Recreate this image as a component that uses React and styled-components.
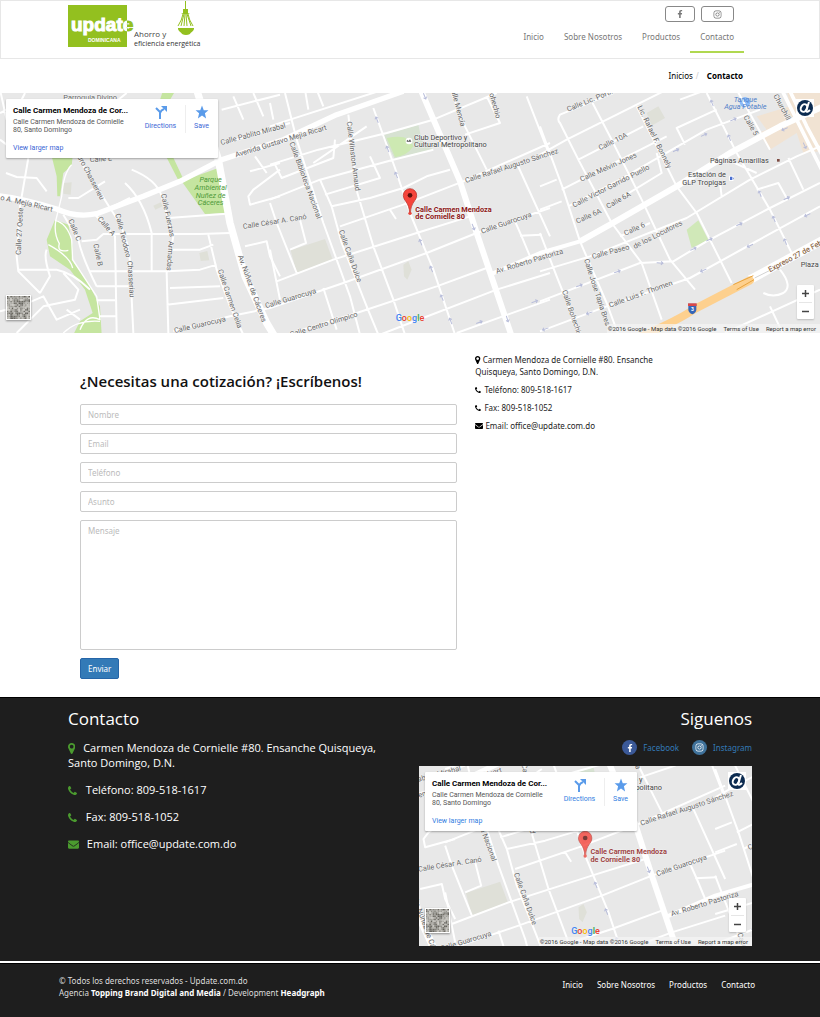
import styled, { createGlobalStyle } from "styled-components";
import { FaEnvelope, FaFacebookF, FaInstagram } from "react-icons/fa";

const GlobalStyle = createGlobalStyle`
    * {
        box-sizing: border-box;
    }

    body {
        margin: 0;
        background: #fff;
        color: #222;
        font-family: "Noto Sans", "Open Sans", sans-serif;
        font-size: 8px;
        line-height: 12px;
    }

    a {
        color: inherit;
        text-decoration: none;
    }
`

const LINKS = ["Inicio", "Sobre Nosotros", "Productos", "Contacto"];

// Street labels: text, x, y, angle
const STREETS = [
    ["Parroquia Divino", 190, 32, 0],
    ["Calle Pablito Mirabal", 664, 166, -15],
    ["Avenida Gustavo Mejia Ricart", 708, 203, -17],
    ["o A. Mejía Ricart", 0, 330, 13],
    ["Calle 27 Oeste", 62, 496, -87],
    ["Calle E", 270, 218, -5],
    ["dro Chasserieu", 232, 202, 62],
    ["Calle C", 205, 392, 68],
    ["Calle A", 292, 388, 50],
    ["Calle B", 280, 464, 78],
    ["Calle Teodoro", 346, 374, 76],
    ["Chasseriau", 382, 514, 86],
    ["Calle Fuerzas", 483, 314, 78],
    ["Armadas", 506, 454, 94],
    ["Calle Carmen Celia", 653, 542, 71],
    ["Av. Núñez de Cáceres", 714, 500, 70],
    ["Calle César A. Canó", 730, 418, -9],
    ["Calle Guarocuya", 524, 730, -13],
    ["Calle Guarocuya", 798, 656, -17],
    ["Calle Centro Olímpico", 872, 742, -17],
    ["Calle Biblioteca Nacional", 868, 160, 70],
    ["Calle Winston Arnaud", 1040, 96, 83],
    ["Calle Caña Dulce", 1016, 424, 70],
    ["Calle Mencía", 1350, -10, 75],
    ["ohechio", 1468, 12, 75],
    ["Calle Rafael Augusto Sánchez", 1398, 280, -18],
    ["Calle Guarocuya", 1446, 432, -19],
    ["Av. Roberto Pastoriza", 1490, 552, -17],
    ["Calle Lic. Portillo", 1704, 66, -22],
    ["Lic. Rafael F. Bonnely", 1912, 52, 64],
    ["Calle 10A", 1800, 182, -26],
    ["Calle Melvin Jones", 1744, 276, -24],
    ["Calle Victor Garrido Puello", 1722, 354, -27],
    ["Calle 6A", 1732, 402, -24],
    ["Calle 6A", 1824, 358, -30],
    ["Calle 6", 1876, 438, -24],
    ["Calle Paseo", 1778, 508, -15],
    ["de los Locutores", 1904, 478, -27],
    ["Calle Luis F. Thomen", 1830, 654, -20],
    ["Calle Jose Tapia Brea", 1752, 510, 72],
    ["Calle Bohechio", 1686, 604, 71],
    ["Calle 5", 2230, 82, 60],
    ["Churchill", 2320, 18, 62],
];

// Places: text, x, y, anchor
const PLACES = [
    ["Club Deportivo y", 1242, 150, "start"],
    ["Cultural Metropolitano", 1242, 173, "start"],
    ["Páginas Amarillas", 2130, 219, "start"],
    ["Estación de", 2178, 263, "end"],
    ["GLP Tropigas", 2178, 286, "end"],
    ["Plaza", 2402, 532, "start"],
];

const PARK = [
    ["Parque", 632, 276],
    ["Ambiental", 632, 300],
    ["Nuñez de", 632, 324],
    ["Cáceres", 632, 347],
];

const WATER = [
    ["Tanque", 2236, 36],
    ["Agua Potable", 2236, 58],
];

// One way arrows: x, y, angle
const ARROWS = [
    [1131, 90, -112], [1163, 178, -112], [1189, 256, -112], [1262, 458, -112], [1294, 538, -112],
    [1326, 624, -112], [1352, 694, -112], [1274, 20, 68], [1420, 412, 68], [1522, 688, 72],
    [1438, 698, -20], [1604, 636, -20], [1636, 718, 160], [1738, 588, -18], [1852, 546, -18],
    [1980, 520, 5], [2080, 478, -25], [2218, 404, -25], [2360, 326, -25], [2110, 542, 155],
    [2250, 468, 155], [2422, 376, 155], [1768, 670, 160], [2136, 40, -112], [2188, 144, -112],
    [2280, 312, -112], [2322, 388, -112], [2356, 456, -112], [2028, 182, -25], [2112, 136, -25],
    [2200, 90, -25], [2354, 118, 155], [2414, 168, 65], [2128, 450, -25],
];

const MINOR = `
    M85 205 60 350 50 500 55 545 120 610M18 250 50 262 110 265 140 305M0 150 20 165
    M55 540H170Q220 550 270 600M190 375 235 450Q245 500 290 590M235 205 330 355Q385 430 390 520L400 730
    M285 375 345 440 350 730M245 455 290 450 310 433H600L690 430M375 280Q430 330 455 430V545
    M395 240Q470 270 485 320L520 440 500 550 505 730M275 160M315 275 235 325H205M330 355 390 325
    M505 385 680 372M270 545H500L600 540 650 525M290 590H400M290 632H345M300 680H350
    M510 480H600L640 465M510 595 660 590M500 645 670 625M625 435 650 540 690 650 730 735
    M520 725 690 680 810 655M735 470 800 455 810 500 840 560M750 245 840 220M765 200 800 250
    M840 240 760 300 745 320 750 345 840 320M700 20 730 90M665 60 840 15M760 10 790 80M675 160 870 100
    M0 665 60 650 130 620 170 690 240 660M120 610 150 560Q130 500 140 480M190 550 235 600 225 630 130 650 50 730
    M200 660 240 690M0 70 60 40 75 10M355 30 380 10M0 0 20 90M230 200 270 150
`;

const MINOR_CENTER = `
    M310 55 375 235 420 370 490 540 555 735M45 10 80 150 160 400 240 620 270 735
    M235 75 262 310 310 470 370 630 405 735M150 270 185 350 215 460 290 650 325 735
    M0 225 145 180 350 130 490 90 680 10M0 330 150 270 370 210 490 180M0 110 60 90 340 0
    M15 225 35 265 190 205 195 150M165 315 330 265 300 200M130 220 290 110
    M185 350 300 325 400 295 470 260 540 240M210 410 400 345 580 275 840 160
    M20 575 190 510 440 430 600 380M0 655 220 580 470 490 620 430 840 355
    M50 735 260 670 500 590 650 535M330 735 420 700 680 600 840 550M560 730 740 665 840 630
    M360 360 378 388M90 390 108 460 60 480M0 340 20 400 80 550M0 480 30 630M160 595 200 720
    M545 10 585 110 650 240M585 135 690 100 650 20M770 20 840 200M740 220 840 440
    M735 395 755 440 780 500M750 438 815 435M105 0 115 60M140 0 160 50M0 40 10 90
`;

const MINOR_EAST = `
    M220 10 60 75Q50 90 60 100L115 210 215 400 305 520 365 690M0 110 70 300 120 455 200 640 235 735
    M155 35 215 150 305 330 390 510 465 600M290 50 410 290 470 370 575 580M500 10 590 190 690 360 755 490
    M0 195 80 150 380 0M115 210 310 110M65 300 380 140M85 350 240 270 500 120 660 60M0 290 50 270M0 360 65 335
    M350 190 365 250 250 320M435 165 410 115 530 60M240 440 330 400M0 545 150 500 440 385 630 270 770 200 840 170
    M0 635 300 520 400 515 500 455 690 355 840 280M0 725 200 650 450 565 640 460 840 350M555 730 840 600
    M540 280 545 320M650 300 715 280 740 325M745 205 790 300M0 430 50 560 120 735M690 650 730 735
    M670 610Q700 625 730 610 760 590 720 540M420 30 500 0M590 0 690 180M540 200 650 250
`;

// Aerial thumbnail cells
const CELLS = Array.from({ length: 196 }, (_, i) => {
    const n = Math.abs(Math.sin(i * 12.9898) * 43758.5453) % 1;
    const c = Math.round(95 + n * 110);
    return { x: i % 14, y: Math.floor(i / 14), fill: `rgb(${c}, ${c - 2}, ${c - 9})` };
});

const MapPin = () => (
    <PinSvg viewBox="0 0 1024 1536" aria-hidden="true">
        <path d="M768 512q0-106-75-181t-181-75-181 75-75 181 75 181 181 75 181-75 75-181zm256 0q0 109-33 179l-364 774q-16 33-47.500 52t-67.500 19-67.500-19-46.500-52l-365-774q-33-70-33-179 0-212 150-362t362-150 362 150 150 362z" />
    </PinSvg>
)

const Phone = () => (
    <PhoneSvg viewBox="0 0 1408 1408" aria-hidden="true">
        <path d="M1408 1112q0 27-10 70.500t-20.500 68.500q-21 50-122 106-94 51-186 51-27 0-53-3.500t-57.500-12.500-47-14.500-55.500-20.500-49-18q-98-35-175-83-127-79-264-216t-216-264q-48-77-83-175-3-9-18-49t-20.500-55.500-14.500-47-12.500-57.500-3.500-53q0-92 51-186 56-101 106-122 25-10 68.500-20.500t70.500-10.500q14 0 21 3 18 6 53 76 11 19 30 54t35 63.500 31 53.500q3 4 17.500 25t21.500 35.500 7 28.500q0 20-28.500 50t-62 55-62 53-28.500 46q0 9 5 22.500t8.500 20.500 14 24 11.500 19q76 137 174 235t235 174q2 1 19 11.500t24 14 20.500 8.500 22.500 5q18 0 46-28.500t53-62 55-62 50-28.500q14 0 28.500 7t35.500 21.500 25 17.500q25 15 53.500 31t63.500 35 54 30q70 35 76 53 3 7 3 21z" />
    </PhoneSvg>
)

const Logo = () => (
    <svg width="134" height="48" viewBox="0 1 134 48" role="img" aria-label="Update Dominicana">
        <defs>
            <clipPath id="logo-in"><rect x="0" y="0" width="59" height="48" /></clipPath>
            <clipPath id="logo-out"><rect x="59" y="0" width="30" height="48" /></clipPath>
        </defs>
        <rect x="0" y="5" width="59" height="42" fill="#93c01f" />
        <LogoWord x="3" y="31" clipPath="url(#logo-in)" fill="#fff" stroke="#fff">update</LogoWord>
        <LogoWord x="3" y="31" clipPath="url(#logo-out)" fill="#93c01f" stroke="#93c01f" aria-hidden="true">update</LogoWord>
        <text x="20" y="42" fontFamily="Liberation Sans" fontWeight="700" fontSize="5" fill="#fff">DOMINICANA</text>
        <text x="66" y="37" fontFamily="Open Sans" fontSize="8" fill="#444">Ahorro y</text>
        <text x="66" y="46" fontFamily="Open Sans" fontSize="7" fill="#333">eficiencia energética</text>
        <g fill="#93c01f">
            <rect x="117" y="0" width="1" height="10" />
            <path d="M115 9h5v4l2 1h-9l2-1z" />
            <path d="M110 28h16v1c-1 3-3 3-4 5q-4 2-8 0c-1-2-3-2-4-5z" />
        </g>
        <path d="M115 14q-1 6-5 12M116 14l-3 12M117 14l-1 12M118 14l1 12M119 14l4 12M120 14q1 6 5 12" stroke="#93c01f" strokeWidth="1" fill="none" />
    </svg>
)

const MapDrawing = ({ viewBox, pinOpacity }) => {
    const [left, top, width, height] = viewBox.split(" ").map(Number);
    const inView = ([, x, y]) => x > left - 200 && x < left + width && y > top - 120 && y < top + height + 20;

    return (
        <MapSvg viewBox={viewBox} preserveAspectRatio="xMidYMid slice" role="img" aria-label="Mapa">
            <rect x="-1000" y="-500" width="4500" height="1800" fill="#e8e8e8" />
            <g fill="#c5e5a0">
                <path d="M155 200H218L215 228 190 250 180 320H172L170 260Z" />
                <path d="M165 390 205 405 218 470 215 510 265 580 300 650 305 735H220L240 695 278 670 255 600 210 540 150 500 140 450Z" />
                <path d="M545 275 655 235 680 370 615 373ZM498 200H518L550 268 535 272ZM490 0H528L510 30H480Z" />
            </g>
            <path d="M1150 137 1255 105 1265 150 1300 180 1185 210Z" fill="#d7e2d2" />
            <path d="M1160 145Q1230 130 1240 170 1220 200 1185 202Z" fill="#cde9b2" />
            <path d="M2060 420 2095 392 2125 450 2075 475Z" fill="#d0e8b8" />
            <path d="M872 482 975 448 998 510 890 550ZM1210 525 1225 515 1235 540 1222 570 1212 560ZM190 280 215 278 212 315 190 312ZM598 490 622 484 628 512 602 514ZM460 348 482 338 488 350 466 360ZM1940 70 1975 50 1995 85 1955 108Z" fill="#dfe0d8" />
            <path d="M2360 0H2500V180L2410 190 2390 130 2310 180 2275 130 2300 120 2270 80 2370 50Z" fill="#f1e3d3" />
            <circle cx="2235" cy="38" r="16" fill="#8abaf8" />
            <g fill="none" stroke="#fff" strokeWidth="6" strokeLinejoin="round">
                <path d={MINOR} />
                <path d={MINOR_CENTER} transform="translate(810 0)" />
                <path d={MINOR_EAST} transform="translate(1620 0)" />
                <path d="M215 225Q190 250 185 320L168 390Q160 430 178 462 170 490 205 482M145 465Q210 500 218 535M165 392Q200 400 215 450L218 510 290 620 300 690Q260 670 240 720M190 730Q230 690 300 695" strokeWidth="4" />
                <path d="M-10 318Q60 325 170 358 230 385 290 372L430 320 540 275 660 212 850 150 1010 75 1210 5" strokeWidth="16" />
                <path d="M590 0 655 210 690 400 735 560 800 700 830 750" strokeWidth="22" />
                <path d="M1262 0 1380 275 1430 430 1535 740" strokeWidth="18" />
                <path d="M1470 555 1620 490 1740 455" strokeWidth="12" />
                <path d="M1740 455 1830 405 2030 290 2190 190 2340 110 2470 50" strokeWidth="18" />
                <path d="M2345 0 2400 110 2475 260M2368 0 2420 110 2495 250" strokeWidth="11" />
                <path d="M2250 570 2480 445" strokeWidth="26" />
            </g>
            <path d="M1900 750Q2040 690 2080 660L2250 572" fill="none" stroke="#fdd08e" strokeWidth="24" strokeLinecap="round" />
            <path d="M2200 585 2260 558M2210 600 2262 570" stroke="#e8a33d" strokeWidth="3" />
            <path d="M2264 565 2310 542" stroke="#bbb" strokeWidth="2" />
            <g fill="none" stroke="#b8bdda" strokeWidth="3">
                {ARROWS.map(([x, y, a]) => (
                    <path key={`${x}-${y}`} d="M-10 0H9M3-5 9 0 3 5" transform={`translate(${x} ${y}) rotate(${a})`} />
                ))}
            </g>
            <StreetLabels>
                {STREETS.filter(inView).map(([label, x, y, a]) => (
                    <text key={`${label}-${x}`} transform={`translate(${x} ${y}) rotate(${a})`}>{label}</text>
                ))}
            </StreetLabels>
            <ParkLabel>
                {PARK.filter(inView).map(([label, x, y]) => <text key={label} x={x} y={y}>{label}</text>)}
            </ParkLabel>
            <WaterLabel>
                {WATER.filter(inView).map(([label, x, y]) => <text key={label} x={x} y={y}>{label}</text>)}
            </WaterLabel>
            <PlaceLabels>
                {PLACES.filter(inView).map(([label, x, y, anchor]) => (
                    <text key={label} x={x} y={y} textAnchor={anchor}>{label}</text>
                ))}
                {inView(["", 2310, 548]) && (
                    <text x="2310" y="548" fill="#7a4a21" transform="rotate(-28 2310 548)">Expreso 27 de Febrero</text>
                )}
            </PlaceLabels>
            <circle cx="1227" cy="154" r="10" fill="#fff" />
            <path d="M1220 156h14l-4-7-4 5-5-4z" fill="#555" />
            <rect x="2331" y="208" width="8" height="8" fill="#7d4b42" />
            <rect x="2187" y="258" width="14" height="16" rx="3" fill="#fff" />
            <path d="M2190 261h7v10h-7zM2198 264h3v6" fill="#4a6fd0" />
            <path d="M2065 642h24v18q0 8-12 14-12-6-12-14z" fill="#3566b8" />
            <path d="M2064 641h26v8h-26z" fill="#d94848" />
            {inView(["", 2077, 665]) && (
                <text x="2077" y="665" textAnchor="middle" fontSize="15" fontWeight="700" fill="#fff">3</text>
            )}
            <g opacity={pinOpacity}>
                <path d="M1229 371C1227 335 1210 335 1210 317A20 20 0 0 1 1250 317C1250 335 1233 335 1231 371Z" fill="#f5453c" stroke="#b02a22" strokeWidth="2" />
                <circle cx="1230" cy="317" r="7" fill="#5c100c" />
                <circle cx="1230" cy="371" r="5" fill="#e8453c" />
                <PinLabel>
                    <text x="1246" y="366">Calle Carmen Mendoza</text>
                    <text x="1246" y="388">de Cornielle 80</text>
                </PinLabel>
            </g>
        </MapSvg>
    )
}

const MapView = ({ viewBox, height, accent, pinOpacity }) => (
    <MapFrame $height={height}>
        <MapDrawing viewBox={viewBox} pinOpacity={pinOpacity} />
        <MapCard>
            <CardText>
                <CardTitle>Calle Carmen Mendoza de Cor...</CardTitle>
                <CardAddress>Calle Carmen Mendoza de Cornielle 80, Santo Domingo</CardAddress>
                <CardLink href="#mapa" $accent={accent}>View larger map</CardLink>
            </CardText>
            <CardAction href="#directions" $accent={accent}>
                <svg width="12" height="14" viewBox="0 0 12 14" aria-hidden="true">
                    <path d="M1 3 5 7M5 14V8Q6 5 9 4" fill="none" stroke="#5a9bea" strokeWidth="2" />
                    <path d="M6 1h6v6z" fill="#5a9bea" />
                </svg>
                Directions
            </CardAction>
            <CardAction href="#save" $accent={accent} $divided>
                <svg width="14" height="14" viewBox="0 0 24 24" aria-hidden="true">
                    <path d="M12 1l3 8h8l-6 5 2 9-7-5-7 5 2-9-6-5h8z" fill="#5a9bea" />
                </svg>
                Save
            </CardAction>
        </MapCard>
        <MapBadge>
            <svg width="18" height="18" viewBox="0 0 18 18" role="img" aria-label="Cuenta">
                <circle cx="9" cy="9" r="8" fill="#0c2b50" />
                <ellipse cx="8" cy="9" rx="3" ry="4" transform="rotate(30 8 9)" fill="none" stroke="#fff" strokeWidth="2" />
                <path d="M13 3 10 12Q11 14 14 11" fill="none" stroke="#fff" strokeWidth="2" />
            </svg>
        </MapBadge>
        <Thumbnail>
            <svg width="23" height="23" viewBox="0 0 14 14" aria-hidden="true">
                {CELLS.map(c => <rect key={`${c.x}-${c.y}`} x={c.x} y={c.y} width="1" height="1" fill={c.fill} />)}
            </svg>
        </Thumbnail>
        <GoogleMark>
            <Letter $color="#4285f4">G</Letter>
            <Letter $color="#ea4335">o</Letter>
            <Letter $color="#fbbc05">o</Letter>
            <Letter $color="#4285f4">g</Letter>
            <Letter $color="#34a853">l</Letter>
            <Letter $color="#ea4335">e</Letter>
        </GoogleMark>
        <ZoomControl>
            <ZoomButton type="button" aria-label="Acercar">
                <svg width="7" height="7" viewBox="0 0 7 7"><path d="M0 3h7v1H0zM3 0h1v7H3z" fill="#444" stroke="#444" strokeWidth=".5" /></svg>
            </ZoomButton>
            <ZoomButton type="button" aria-label="Alejar" $divided>
                <svg width="7" height="7" viewBox="0 0 7 7"><path d="M0 3h7v1H0z" fill="#444" stroke="#444" strokeWidth=".5" /></svg>
            </ZoomButton>
        </ZoomControl>
        <Attribution>
            <span>©2016 Google - Map data ©2016 Google</span>
            <a href="#terms">Terms of Use</a>
            <a href="#report">Report a map error</a>
        </Attribution>
    </MapFrame>
)

const App = () => {
    return (
        <>
            <GlobalStyle />
            <Header>
                <HeaderInner>
                    <a href="#inicio"><Logo /></a>
                    <HeaderRight>
                        <SocialButtons>
                            <SocialButton href="#facebook" aria-label="Facebook"><FaFacebookF size={8} /></SocialButton>
                            <SocialButton href="#instagram" aria-label="Instagram" $wide><FaInstagram size={9} /></SocialButton>
                        </SocialButtons>
                        <Nav>
                            {LINKS.map(l => (
                                <NavLink key={l} href={`#${l}`} $active={l === "Contacto"}>{l}</NavLink>
                            ))}
                        </Nav>
                    </HeaderRight>
                </HeaderInner>
            </Header>
            <Breadcrumb>
                <a href="#inicio">Inicios</a>
                <Slash>/</Slash>
                <b>Contacto</b>
            </Breadcrumb>
            <MapView viewBox="0 10 2460 720" height={240} accent="#3a66d6" pinOpacity={1} />
            <Main>
                <Form onSubmit={e => e.preventDefault()}>
                    <FormTitle>¿Necesitas una cotización? ¡Escríbenos!</FormTitle>
                    <Field type="text" placeholder="Nombre" aria-label="Nombre" />
                    <Field type="email" placeholder="Email" aria-label="Email" />
                    <Field type="tel" placeholder="Teléfono" aria-label="Teléfono" />
                    <Field type="text" placeholder="Asunto" aria-label="Asunto" />
                    <Message placeholder="Mensaje" aria-label="Mensaje" />
                    <Submit type="submit">Enviar</Submit>
                </Form>
                <Details>
                    <Detail><MapPin /> Carmen Mendoza de Cornielle #80. Ensanche Quisqueya, Santo Domingo, D.N.</Detail>
                    <Detail><Phone /> Teléfono: 809-518-1617</Detail>
                    <Detail><Phone /> Fax: 809-518-1052</Detail>
                    <Detail><FaEnvelope size={8} /> Email: office@update.com.do</Detail>
                </Details>
            </Main>
            <Footer>
                <FooterInner>
                    <div>
                        <FooterTitle>Contacto</FooterTitle>
                        <FooterDetail><MapPin /> Carmen Mendoza de Cornielle #80. Ensanche Quisqueya, Santo Domingo, D.N.</FooterDetail>
                        <FooterDetail><Phone /> Teléfono: 809-518-1617</FooterDetail>
                        <FooterDetail><Phone /> Fax: 809-518-1052</FooterDetail>
                        <FooterDetail><FaEnvelope size={11} /> Email: office@update.com.do</FooterDetail>
                    </div>
                    <div>
                        <FooterTitle $right>Siguenos</FooterTitle>
                        <Follow>
                            <FollowLink href="#facebook"><Round $color="#3b5998"><FaFacebookF size={8} /></Round>Facebook</FollowLink>
                            <FollowLink href="#instagram"><Round $color="#3f729b"><FaInstagram size={9} /></Round>Instagram</FollowLink>
                        </Follow>
                        <MapView viewBox="731 101 1000 540" height={180} accent="#2f7de1" pinOpacity={0.8} />
                    </div>
                </FooterInner>
            </Footer>
            <Bottom>
                <BottomInner>
                    <div>
                        © Todos los derechos reservados - Update.com.do
                        <br />
                        Agencia <b>Topping Brand Digital and Media</b> / Development <b>Headgraph</b>
                    </div>
                    <BottomNav>
                        {LINKS.map(l => <a key={l} href={`#${l}`}>{l}</a>)}
                    </BottomNav>
                </BottomInner>
            </Bottom>
        </>
    )
}

const Container = styled.div`
    width: 100%;
    max-width: 684px;
    margin: 0 auto;
`

const Header = styled.header`
    border: 1px solid #e7e7e7;
`

const HeaderInner = styled(Container)`
    display: flex;
    justify-content: space-between;
    height: 57px;
    padding-right: 8px;
`

const HeaderRight = styled.div`
    display: flex;
    flex-direction: column;
    align-items: flex-end;
    padding-top: 5px;
`

const SocialButtons = styled.div`
    display: flex;
    gap: 6px;
    padding-right: 10px;
`

const SocialButton = styled.a`
    display: flex;
    align-items: center;
    justify-content: center;
    width: ${({ $wide }) => ($wide ? 33 : 30)}px;
    height: 16px;
    border: 1px solid #888;
    border-radius: 3px;
    color: #777;
`

const Nav = styled.nav`
    display: flex;
`

const NavLink = styled.a`
    padding: 9px 10px 8px;
    color: #777;
    border-bottom: 2px solid ${({ $active }) => ($active ? "#b0d850" : "transparent")};
`

const LogoWord = styled.text`
    font-family: "Liberation Sans", Arial, sans-serif;
    font-size: 19px;
    font-weight: 700;
`

const Breadcrumb = styled(Container)`
    display: flex;
    justify-content: flex-end;
    padding: 11px 9px 11px 0;
    color: #000;
`

const Slash = styled.span`
    color: #ccc;
    padding: 0 8px 0 3px;
`

const MapFrame = styled.div`
    position: relative;
    height: ${({ $height }) => $height}px;
    overflow: hidden;
    font-family: Roboto, sans-serif;
`

const MapSvg = styled.svg`
    display: block;
    width: 100%;
    height: 100%;
    font-family: Roboto, sans-serif;
`

const StreetLabels = styled.g`
    font-size: 22px;
    fill: #666;
    stroke: #f4f4f4;
    stroke-width: 3px;
    paint-order: stroke;
`

const PlaceLabels = styled.g`
    font-size: 22px;
    fill: #444;
    stroke: #f4f4f4;
    stroke-width: 3px;
    paint-order: stroke;
`

const ParkLabel = styled.g`
    font-size: 22px;
    font-style: italic;
    text-anchor: middle;
    fill: #4d9a3a;
`

const WaterLabel = styled(ParkLabel)`
    fill: #4f7fc9;
`

const PinLabel = styled.g`
    font-size: 22px;
    font-weight: 700;
    fill: #8c1414;
    stroke: #f4f4f4;
    stroke-width: 3px;
    paint-order: stroke;
`

const MapCard = styled.div`
    position: absolute;
    top: 6px;
    left: 6px;
    display: flex;
    width: 212px;
    height: 59px;
    padding: 6px 0 0 7px;
    background: #fff;
    border-radius: 1px;
    box-shadow: 0 1px 2px rgba(0, 0, 0, .3);
`

const CardText = styled.div`
    width: 122px;
    display: flex;
    flex-direction: column;
`

const CardTitle = styled.div`
    color: #000;
    font-size: 8px;
    font-weight: 700;
    line-height: 12px;
    white-space: nowrap;
`

const CardAddress = styled.div`
    color: #555;
    font-size: 7px;
    line-height: 8px;
    padding: 1px 4px 0 0;
`

const CardLink = styled.a`
    margin-top: 9px;
    color: ${({ $accent }) => $accent};
    font-size: 7px;
    line-height: 10px;
`

const CardAction = styled.a`
    display: flex;
    flex-direction: column;
    align-items: center;
    gap: 3px;
    width: ${({ $divided }) => ($divided ? 32 : 50)}px;
    height: 28px;
    border-left: 1px solid ${({ $divided }) => ($divided ? "#eee" : "transparent")};
    color: ${({ $accent }) => $accent};
    font-size: 7px;
    line-height: 9px;
`

const MapBadge = styled.div`
    position: absolute;
    top: 6px;
    right: 6px;
    display: flex;
    background: #fff;
`

const Thumbnail = styled.div`
    position: absolute;
    left: 6px;
    bottom: 13px;
    display: flex;
    border: 1px solid #fff;
    box-shadow: 0 1px 2px rgba(0, 0, 0, .4);
`

const GoogleMark = styled.div`
    position: absolute;
    left: 0;
    right: 0;
    bottom: 9px;
    text-align: center;
    font-size: 9px;
    font-weight: 500;
`

const Letter = styled.span`
    color: ${({ $color }) => $color};
`

const ZoomControl = styled.div`
    position: absolute;
    right: 6px;
    bottom: 14px;
    padding: 0 2px;
    background: #fff;
    border-radius: 1px;
    box-shadow: 0 1px 2px rgba(0, 0, 0, .2);
`

const ZoomButton = styled.button`
    display: flex;
    align-items: center;
    justify-content: center;
    width: 13px;
    height: 17px;
    padding: 0;
    border: 0;
    border-top: ${({ $divided }) => ($divided ? "1px solid #e6e6e6" : "0")};
    background: none;
`

const Attribution = styled.div`
    position: absolute;
    right: 0;
    bottom: 0;
    display: flex;
    gap: 7px;
    padding: 0 4px 0 1px;
    background: rgba(245, 245, 245, .7);
    color: #333;
    font-size: 6px;
    line-height: 9px;
`

const Main = styled(Container)`
    display: grid;
    grid-template-columns: 2fr 1fr;
    gap: 18px;
    padding: 21px 88px 18px 12px;
`

const Form = styled.form`
    display: flex;
    flex-direction: column;
    align-items: flex-start;
    gap: 8px;
`

const FormTitle = styled.h3`
    margin: 17px 0 5px;
    font-family: "Open Sans", sans-serif;
    font-size: 15px;
    font-weight: 600;
    line-height: 20px;
    color: #111;
`

const Field = styled.input`
    width: 100%;
    height: 21px;
    padding: 0 7px;
    border: 1px solid #ccc;
    border-radius: 2px;
    font-family: inherit;
    font-size: 8px;

    &::placeholder {
        color: #bbb;
    }
`

const Message = styled.textarea`
    display: block;
    width: 100%;
    height: 130px;
    padding: 4px 7px;
    border: 1px solid #ccc;
    border-radius: 2px;
    font-family: inherit;
    font-size: 8px;
    line-height: 12px;
    resize: none;

    &::placeholder {
        color: #bbb;
    }
`

const Submit = styled.button`
    height: 21px;
    padding: 0 7px;
    border: 1px solid #2565a8;
    border-radius: 2px;
    background: #337ab7;
    color: #fff;
    font-family: inherit;
    font-size: 8px;
`

const PinSvg = styled.svg`
    height: 1em;
    fill: currentColor;
    vertical-align: -1px;
`

const PhoneSvg = styled.svg`
    height: 1em;
    padding: 1px 1px 1px 0;
    fill: currentColor;
    vertical-align: -1px;
`

const Details = styled.div`
    color: #222;
`

const Detail = styled.p`
    margin: 0 0 6px;

    svg {
        color: #000;
        vertical-align: -1px;
    }
`

const Footer = styled.footer`
    background: #1e1e1e;
    border-top: 1px solid #000;
    border-bottom: 2px solid #fff;
    color: #fff;
    font-family: "Open Sans", sans-serif;
`

const FooterInner = styled(Container)`
    display: grid;
    grid-template-columns: 1fr 1fr;
    gap: 18px;
    padding: 10px 0 15px;
`

const FooterTitle = styled.h2`
    margin: 0 0 10px;
    font-size: 17px;
    font-weight: 400;
    line-height: 22px;
    text-align: ${({ $right }) => ($right ? "right" : "left")};
`

const FooterDetail = styled.p`
    margin: 0 0 12px;
    font-size: 11px;
    line-height: 15px;

    svg {
        margin-right: 5px;
        color: #4b9b2f;
        vertical-align: -2px;
    }
`

const Follow = styled.div`
    display: flex;
    justify-content: flex-end;
    gap: 13px;
    margin-bottom: 11px;
    font-family: "Noto Sans", sans-serif;
`

const FollowLink = styled.a`
    display: flex;
    align-items: center;
    gap: 6px;
    color: #337ab7;
`

const Round = styled.span`
    display: flex;
    align-items: center;
    justify-content: center;
    width: 15px;
    height: 15px;
    border-radius: 50%;
    background: ${({ $color }) => $color};
    color: #fff;
`

const Bottom = styled.div`
    background: #1e1e1e;
    border-top: 1px solid #000;
    color: #ddd;

    b {
        color: #fff;
    }
`

const BottomInner = styled.div`
    display: flex;
    justify-content: space-between;
    max-width: 702px;
    margin: 0 auto;
    padding: 11px 6px 19px 0;
`

const BottomNav = styled.nav`
    display: flex;
    gap: 14px;
    padding-top: 4px;
    color: #fff;
`

export default App;
